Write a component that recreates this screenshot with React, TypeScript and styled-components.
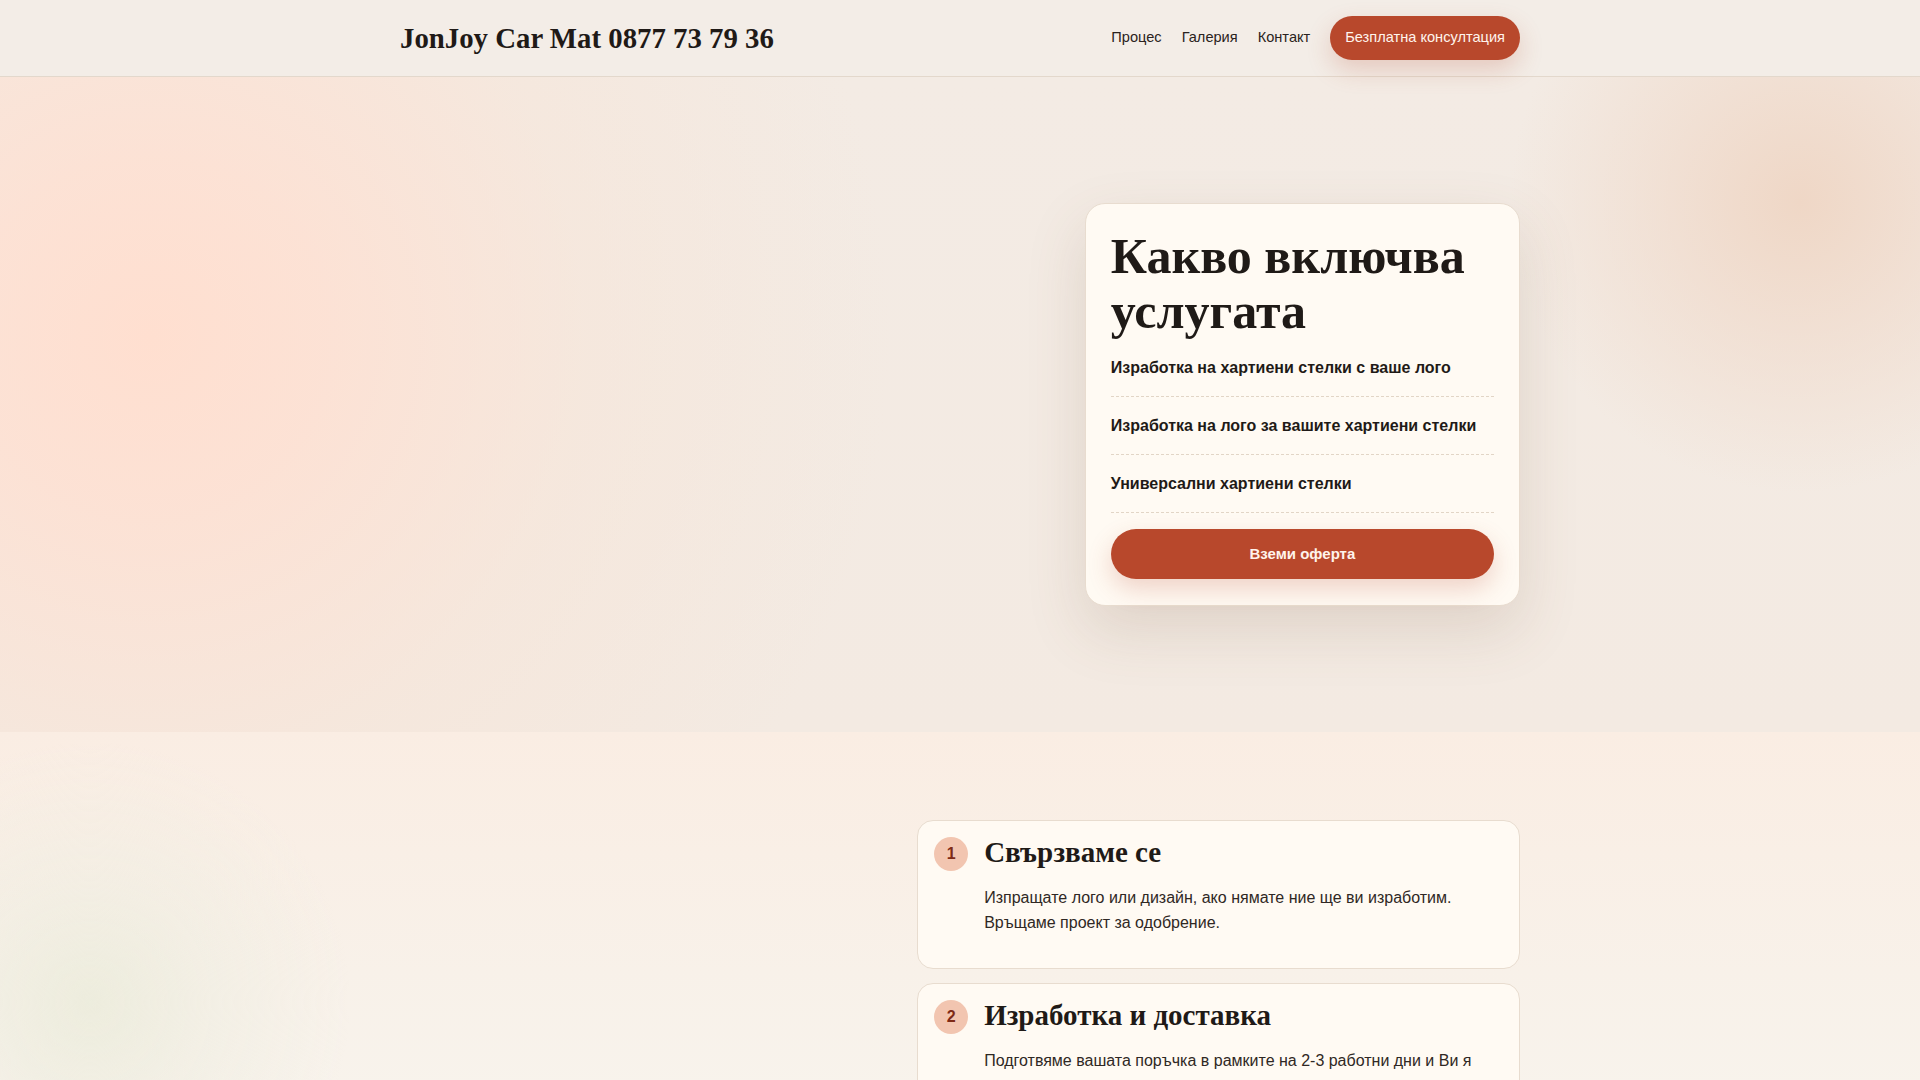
import React from "react";
import styled, { createGlobalStyle } from "styled-components";

const GlobalStyle = createGlobalStyle`
  html, body {
    margin: 0;
    padding: 0;
    background: #f7f1ea;
    color: #1f1a17;
    font-family: "Liberation Sans", Arial, sans-serif;
  }
  * {
    box-sizing: border-box;
  }
`;

const accent = "#b8482c";

const Page = styled.div`
  min-height: 1080px;
  background: #f7f1ea;
`;

const Container = styled.div`
  max-width: 1120px;
  margin: 0 auto;
`;

const Header = styled.header`
  height: 77px;
  background: #f3ede7;
  border-bottom: 1px solid #e3d8cc;
`;

const HeaderInner = styled(Container)`
  height: 100%;
  display: flex;
  align-items: center;
  justify-content: space-between;
`;

const Logo = styled.div`
  font-family: "Liberation Serif", "Times New Roman", serif;
  font-weight: 700;
  font-size: 28.8px;
  color: #1f1a17;
`;

const Nav = styled.nav`
  display: flex;
  align-items: center;
  gap: 20px;
`;

const NavLink = styled.a`
  font-size: 14.6px;
  color: #2a2320;
  text-decoration: none;
  margin-bottom: 2px;
`;

const PillButton = styled.a<{ $wide?: boolean }>`
  display: flex;
  align-items: center;
  justify-content: center;
  height: ${(p) => (p.$wide ? "50px" : "44px")};
  padding: 0 15px 2px;
  border-radius: 999px;
  background: ${accent};
  color: #fff4ec;
  font-size: ${(p) => (p.$wide ? "15px" : "14.6px")};
  font-weight: ${(p) => (p.$wide ? 700 : 400)};
  text-decoration: none;
  box-shadow: 0 10px 24px rgba(184, 72, 44, 0.22);
`;

const Hero = styled.section`
  min-height: 655px;
  display: flex;
  align-items: center;
  background:
    radial-gradient(circle at 1800px 125px, #efd7c6 0, rgba(240, 218, 203, 0.65) 130px, rgba(242, 235, 228, 0) 290px),
    radial-gradient(circle at 150px 260px, #ffdfd0 0, rgba(254, 224, 210, 0.85) 170px, rgba(248, 228, 214, 0.45) 440px, rgba(243, 235, 228, 0) 740px),
    linear-gradient(180deg, #f3ebe4 0%, #f3eae2 100%);
`;

const HeroGrid = styled(Container)`
  width: 100%;
  display: grid;
  grid-template-columns: 1.5fr 1fr;
  gap: 32px;
`;

const Card = styled.div`
  background: #fffaf3;
  border: 1px solid #e8dccf;
  border-radius: 20px;
`;

const OfferCard = styled(Card)`
  grid-column: 2;
  padding: 25px 25px 26px;
  box-shadow: 0 24px 60px rgba(120, 90, 60, 0.16);
`;

const OfferTitle = styled.h2`
  margin: 0;
  font-family: "Liberation Serif", "Times New Roman", serif;
  font-weight: 700;
  font-size: 50px;
  line-height: 1.1;
  color: #1f1a17;
`;

const IncludeList = styled.ul`
  list-style: none;
  margin: 0 0 16px;
  padding: 0;
`;

const IncludeItem = styled.li`
  padding: 16.5px 0;
  border-bottom: 1px dashed #e2d5c6;
  font-size: 16px;
  line-height: 24px;
  font-weight: 700;
  color: #1f1a17;
`;

const Steps = styled.section`
  padding: 88px 0 80px;
  background:
    radial-gradient(circle at 90px 270px, rgba(236, 236, 220, 0.9) 0, rgba(238, 237, 224, 0.5) 120px, rgba(246, 242, 234, 0) 260px),
    linear-gradient(180deg, #faede3 0%, #f8f1e9 50%, #f8f5ef 100%);
`;

const StepsGrid = styled(Container)`
  display: grid;
  grid-template-columns: 1fr 1.285fr;
  gap: 48px;
`;

const StepList = styled.div`
  grid-column: 2;
  display: flex;
  flex-direction: column;
  gap: 14px;
`;

const StepCard = styled(Card)`
  border-radius: 16px;
  padding: 16px;
  display: grid;
  grid-template-columns: 34px 1fr;
  gap: 16px;
`;

const StepNumber = styled.div`
  width: 34px;
  height: 34px;
  border-radius: 50%;
  background: #f2c5b0;
  color: #7e2a16;
  font-size: 16px;
  font-weight: 700;
  display: flex;
  align-items: center;
  justify-content: center;
`;

const StepTitle = styled.h3`
  margin: 0;
  font-family: "Liberation Serif", "Times New Roman", serif;
  font-weight: 700;
  font-size: 29px;
  line-height: 1.1;
  color: #1f1a17;
`;

const StepText = styled.p`
  margin: 16px 0;
  font-size: 16px;
  line-height: 1.6;
  color: #2f2824;
`;

const includes = [
  "Изработка на хартиени стелки с ваше лого",
  "Изработка на лого за вашите хартиени стелки",
  "Универсални хартиени стелки",
];

const steps = [
  {
    title: "Свързваме се",
    text: "Изпращате лого или дизайн, ако нямате ние ще ви изработим. Връщаме проект за одобрение.",
  },
  {
    title: "Изработка и доставка",
    text: "Подготвяме вашата поръчка в рамките на 2-3 работни дни и Ви я изпращаме с куриер до посочен от Вас адрес.",
  },
];

export default function App() {
  return (
    <Page>
      <GlobalStyle />
      <Header>
        <HeaderInner>
          <Logo>JonJoy Car Mat 0877 73 79 36</Logo>
          <Nav>
            <NavLink href="#process">Процес</NavLink>
            <NavLink href="#gallery">Галерия</NavLink>
            <NavLink href="#contact">Контакт</NavLink>
            <PillButton href="#contact">Безплатна консултация</PillButton>
          </Nav>
        </HeaderInner>
      </Header>

      <Hero>
        <HeroGrid>
          <OfferCard>
            <OfferTitle>Какво включва услугата</OfferTitle>
            <IncludeList>
              {includes.map((item) => (
                <IncludeItem key={item}>{item}</IncludeItem>
              ))}
            </IncludeList>
            <PillButton $wide href="#contact">
              Вземи оферта
            </PillButton>
          </OfferCard>
        </HeroGrid>
      </Hero>

      <Steps id="process">
        <StepsGrid>
          <StepList>
            {steps.map((step, i) => (
              <StepCard key={step.title}>
                <StepNumber>{i + 1}</StepNumber>
                <div>
                  <StepTitle>{step.title}</StepTitle>
                  <StepText>{step.text}</StepText>
                </div>
              </StepCard>
            ))}
          </StepList>
        </StepsGrid>
      </Steps>
    </Page>
  );
}
